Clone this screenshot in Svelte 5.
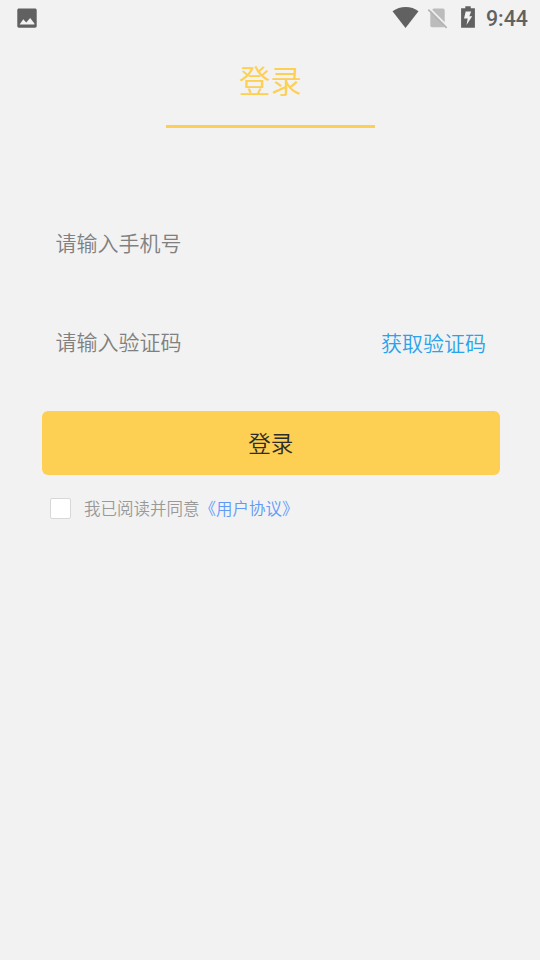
<script>
  let agreed = $state(false);
</script>

<main class="screen">
  <header class="status">
    <svg class="photo" width="20" height="20" viewBox="0 0 20 20">
      <path fill="#616161" fill-rule="evenodd" d="M2 .4h16c1 0 1.7.7 1.7 1.7v16c0 1-.7 1.7-1.7 1.7H2c-1 0-1.7-.7-1.7-1.7v-16C.3 1.100 1 .4 2 .4zM6.300 11.300 2.600 16.400h14.800v-1L13.200 10l-4 4.600z" />
    </svg>
    <svg class="system" width="92" height="24" viewBox="0 0 92 24">
      <path fill="#616161" d="M.5 6.300C8 .500 19.500.500 26.500 6.300L13.500 23z" />
      <path fill="#bcbcbc" d="M41.500 3.500h9.500a1.700 1.700 0 0 1 1.700 1.700v15.300a1.700 1.700 0 0 1-1.700 1.700H40a1.700 1.700 0 0 1-1.700-1.700V6.700z" />
      <path stroke="#f2f2f2" stroke-width="1.800" d="M37.500 3.300 55.800 21.600" />
      <path stroke="#b4b4b4" stroke-width="1.800" d="M36.300 4.600 54.600 22.900" />
      <path fill="#616161" d="M73.300 1.200h5.400v2h4.200v19.600H69.100V3.200h4.200z" />
      <path fill="#f2f2f2" d="M73.700 6.500h5.500l-1.900 4.700h2.900l-5.700 8.800 1.200-6.600h-3.700z" />
    </svg>
    <span class="time">9:44</span>
  </header>

  <div class="tab">登录</div>

  <form class="form" onsubmit={(e) => e.preventDefault()}>
    <input class="phone" type="tel" placeholder="请输入手机号" />
    <div class="code-row">
      <input class="code" type="text" placeholder="请输入验证码" />
      <button class="get-code" type="button">获取验证码</button>
    </div>
    <button class="submit" type="submit">登录</button>
    <label class="agreement">
      <input type="checkbox" bind:checked={agreed} />
      <span>我已阅读并同意<a href="#agreement">《用户协议》</a></span>
    </label>
  </form>
</main>

<style>
  :global(body) {
    background: #f2f2f2;
  }
  .screen {
    box-sizing: border-box;
    width: 540px;
    height: 960px;
    overflow: hidden;
    background: #f2f2f2;
    font-family: "Noto Sans CJK SC", sans-serif;
    font-weight: 350;
  }
  input,
  button {
    box-sizing: border-box;
    margin: 0;
    padding: 0;
    border: 0;
    background: none;
    font-family: inherit;
    font-weight: inherit;
    outline: none;
  }
  .status {
    box-sizing: border-box;
    display: flex;
    align-items: center;
    height: 36px;
    padding: 0 12px 0 17px;
  }
  .system {
    margin: -2px 2px 0 auto;
  }
  .time {
    width: 42px;
    color: #616161;
    font: 500 21.3px/24px Roboto, sans-serif;
    white-space: nowrap;
    padding-top: 2px;
  }
  .tab {
    box-sizing: border-box;
    width: 209px;
    height: 92px;
    margin: 0 0 0 166px;
    padding-top: 21px;
    border-bottom: 3px solid #fdcf52;
    color: #fdcf52;
    font-size: 31.4px;
    line-height: 46px;
    text-align: center;
  }
  .form {
    display: flex;
    flex-direction: column;
    width: 457.5px;
    margin: 90px 0 0 42px;
  }
  .phone,
  .code {
    height: 48px;
    padding-left: 13.5px;
    font-size: 21px;
    color: #333;
  }
  .phone::placeholder,
  .code::placeholder {
    color: #808080;
    opacity: 1;
  }
  .code-row {
    display: flex;
    justify-content: space-between;
    align-items: center;
    height: 48px;
    margin-top: 51px;
    padding-right: 13.5px;
  }
  .code {
    width: 260px;
  }
  .get-code {
    padding-top: 2px;
    color: #29a3ec;
    font-size: 21px;
    line-height: 46px;
    white-space: nowrap;
  }
  .submit {
    height: 64px;
    margin-top: 46px;
    padding-bottom: 2px;
    border-radius: 6px;
    background: #fdcf52;
    color: #2c2c2c;
    font-size: 22.5px;
  }
  .agreement {
    display: flex;
    align-items: center;
    gap: 13px;
    margin: 20px 0 0 8px;
    color: #999;
    font-size: 16.5px;
    line-height: 26px;
  }
  .agreement input {
    appearance: none;
    width: 21px;
    height: 21px;
    border: 1px solid #d8d8d8;
    border-radius: 2px;
    background: #fff;
  }
  .agreement input:checked {
    background: #fdcf52;
  }
  .agreement a {
    color: #6199f8;
    text-decoration: none;
  }
</style>
